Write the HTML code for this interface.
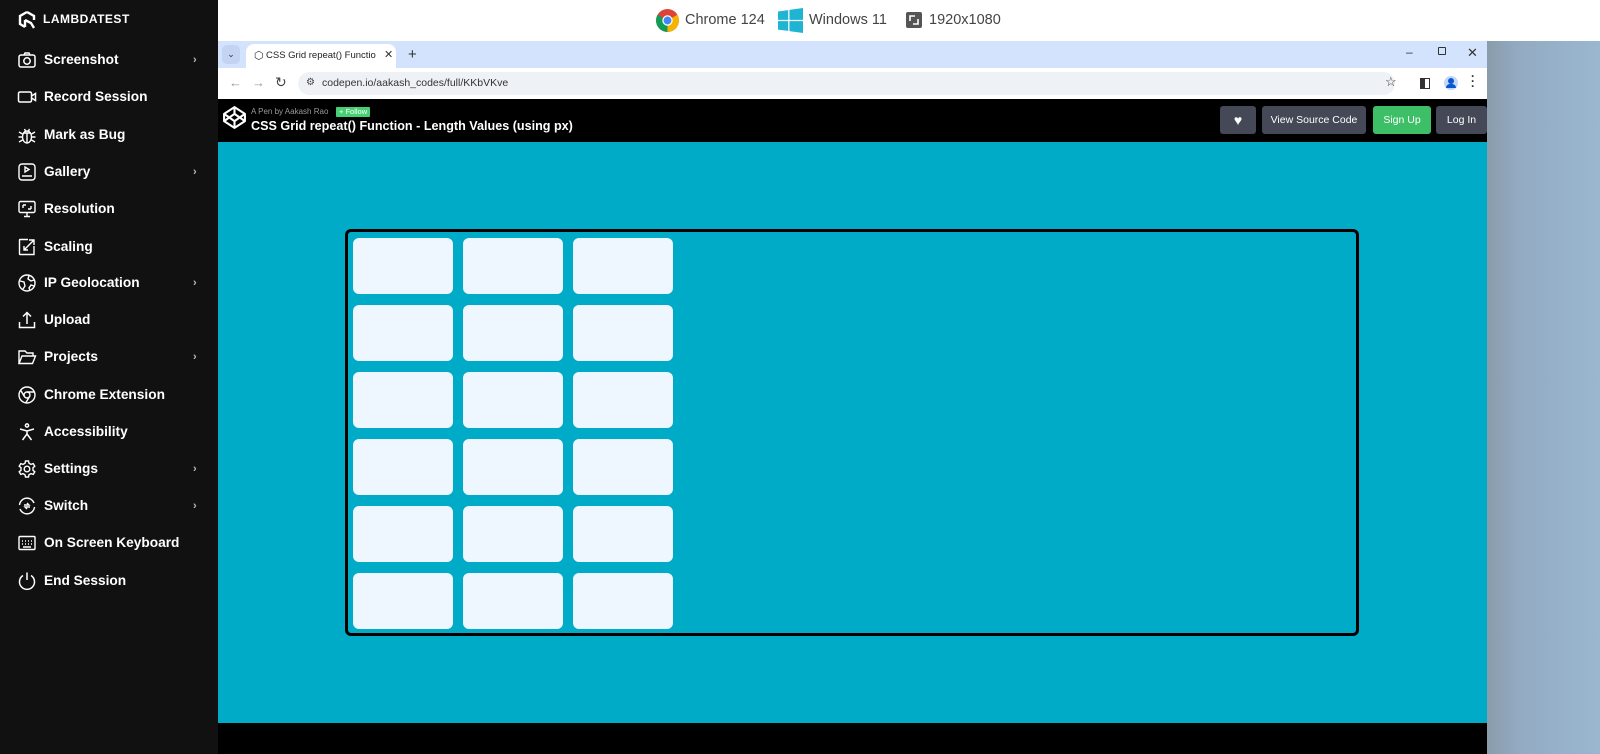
<!DOCTYPE html>
<html><head><meta charset="utf-8"><style>
*{margin:0;padding:0;box-sizing:border-box}
body{width:1600px;height:754px;overflow:hidden;position:relative;background:#fff;font-family:"Liberation Sans",sans-serif}
.a{position:absolute}
#side{left:0;top:0;width:218px;height:754px;background:#111}
.it{position:absolute;left:0;width:218px;height:30px;color:#fff;font-weight:bold;font-size:13.7px;line-height:30px}
.it svg{position:absolute;left:17px;top:5px}
.it span{position:absolute;left:44px}
.it i{position:absolute;left:193px;font-style:normal;font-size:11px;color:#bbb}
.cell{position:absolute;width:100px;height:56px;background:#eef6ff;border-radius:6px}
.btn{position:absolute;top:106px;height:28px;border-radius:3px;color:#fff;font-size:10.5px;line-height:28px;text-align:center;background:#444857}
</style></head><body>
<div id="side" class="a">
 <svg class="a" style="left:17px;top:10px" width="20" height="20" viewBox="0 0 20 20" fill="none" stroke="#fff" stroke-width="2.4"><path d="M10 2 L17 6 V10 M10 2 L3 6 V14 L8 17 M8 10 V17 M8 10 L14 13 L17 18"/></svg>
 <div class="a" style="left:43px;top:12px;color:#fff;font-weight:bold;font-size:12px;letter-spacing:0.5px">LAMBDATEST</div>
 <div class="it" style="top:45px"><svg width="20" height="20" viewBox="0 0 20 20" fill="none" stroke="#fff" stroke-width="1.5"><rect x="2" y="5" width="16" height="12" rx="2"/><circle cx="10" cy="11" r="3.2"/><path d="M7 5 L8 3 H12 L13 5"/></svg><span>Screenshot</span><i>›</i></div>
 <div class="it" style="top:82px"><svg width="20" height="20" viewBox="0 0 20 20" fill="none" stroke="#fff" stroke-width="1.5"><rect x="1.5" y="5" width="13" height="10" rx="1.5"/><path d="M14.5 9 L18.5 6.5 V13.5 L14.5 11"/></svg><span>Record Session</span></div>
 <div class="it" style="top:120px"><svg width="20" height="20" viewBox="0 0 20 20" fill="none" stroke="#fff" stroke-width="1.4"><ellipse cx="10" cy="12" rx="4.5" ry="6"/><path d="M6 8 H14 M10 8 V18 M2 7 L5.5 9 M18 7 L14.5 9 M1.5 12 H5.5 M18.5 12 H14.5 M2 17 L5.5 15 M18 17 L14.5 15 M7.5 4 L8.5 6 M12.5 4 L11.5 6"/></svg><span>Mark as Bug</span></div>
 <div class="it" style="top:157px"><svg width="20" height="20" viewBox="0 0 20 20" fill="none" stroke="#fff" stroke-width="1.4"><rect x="2" y="2" width="16" height="16" rx="3"/><path d="M8 5 L12 7.5 L8 10 Z M5 14 H15"/></svg><span>Gallery</span><i>›</i></div>
 <div class="it" style="top:194px"><svg width="20" height="20" viewBox="0 0 20 20" fill="none" stroke="#fff" stroke-width="1.4"><rect x="2" y="2.5" width="16" height="11" rx="1.5"/><path d="M7 17.5 H13 M10 13.5 V17.5 M6 6 V9 M6 6 H9 M14 10 V7 M14 10 H11"/></svg><span>Resolution</span></div>
 <div class="it" style="top:232px"><svg width="20" height="20" viewBox="0 0 20 20" fill="none" stroke="#fff" stroke-width="1.4"><path d="M11 2.5 H3 A0.5 .5 0 0 0 2.5 3 V17 A.5 .5 0 0 0 3 17.5 H17 V9 M7 13 L17 3 M12 3 H17 V8 M7 9 V13 H11"/></svg><span>Scaling</span></div>
 <div class="it" style="top:268px"><svg width="20" height="20" viewBox="0 0 20 20" fill="none" stroke="#fff" stroke-width="1.4"><circle cx="10" cy="10" r="8"/><path d="M3 8 L7 9 L8 13 L6 16 M12 2.5 L11 6 L14 8 L17 7 M17 13 L14 12 L12 15 L13 17.5"/></svg><span>IP Geolocation</span><i>›</i></div>
 <div class="it" style="top:305px"><svg width="20" height="20" viewBox="0 0 20 20" fill="none" stroke="#fff" stroke-width="1.5"><path d="M2.5 12 V17.5 H17.5 V12 M10 14 V2.5 M6 6.5 L10 2.5 L14 6.5"/></svg><span>Upload</span></div>
 <div class="it" style="top:342px"><svg width="20" height="20" viewBox="0 0 20 20" fill="none" stroke="#fff" stroke-width="1.4"><path d="M2 16.5 V4 H8 L10 6 H16 V9 M2 16.5 L5 9 H18.5 L15.5 16.5 Z"/></svg><span>Projects</span><i>›</i></div>
 <div class="it" style="top:380px"><svg width="20" height="20" viewBox="0 0 20 20" fill="none" stroke="#fff" stroke-width="1.4"><circle cx="10" cy="10" r="8"/><circle cx="10" cy="10" r="3"/><path d="M10 7 H17.5 M7.4 11.5 L3.5 5 M12.6 11.5 L8.7 17.9"/></svg><span>Chrome Extension</span></div>
 <div class="it" style="top:417px"><svg width="20" height="20" viewBox="0 0 20 20" fill="none" stroke="#fff" stroke-width="1.5"><circle cx="10" cy="3.5" r="1.6"/><path d="M3 7 L10 9 L17 7 M10 9 V12 L5.5 18 M10 12 L14.5 18"/></svg><span>Accessibility</span></div>
 <div class="it" style="top:454px"><svg width="20" height="20" viewBox="0 0 20 20" fill="none" stroke="#fff" stroke-width="1.4"><circle cx="10" cy="10" r="2.8"/><path d="M8.5 2 H11.5 L12 4.3 L14 5.4 L16.2 4.6 L17.8 7.2 L16 8.7 V11.3 L17.8 12.8 L16.2 15.4 L14 14.6 L12 15.7 L11.5 18 H8.5 L8 15.7 L6 14.6 L3.8 15.4 L2.2 12.8 L4 11.3 V8.7 L2.2 7.2 L3.8 4.6 L6 5.4 L8 4.3 Z"/></svg><span>Settings</span><i>›</i></div>
 <div class="it" style="top:491px"><svg width="20" height="20" viewBox="0 0 20 20" fill="none" stroke="#fff" stroke-width="1.4"><path d="M2.5 9 A7.5 7.5 0 0 1 17 7 M17.5 11 A7.5 7.5 0 0 1 3 13 M7 9 H12 L10 7 M13 11 H8 L10 13"/></svg><span>Switch</span><i>›</i></div>
 <div class="it" style="top:528px"><svg width="20" height="20" viewBox="0 0 20 20" fill="none" stroke="#fff" stroke-width="1.4"><rect x="2" y="3.5" width="16" height="13" rx="1"/><path d="M5 8 H6 M8 8 H9 M11 8 H12 M14 8 H15 M5 11 H6 M8 11 H9 M11 11 H12 M14 11 H15 M6 14 H14"/></svg><span>On Screen Keyboard</span></div>
 <div class="it" style="top:566px"><svg width="20" height="20" viewBox="0 0 20 20" fill="none" stroke="#fff" stroke-width="1.5"><path d="M6 4.5 A7.5 7.5 0 1 0 14 4.5 M10 1.5 V9"/></svg><span>End Session</span></div>
</div>

<!-- top info bar -->
<svg class="a" style="left:655px;top:8px" width="25" height="25" viewBox="0 0 24 24"><circle cx="12" cy="12" r="11" fill="#db4437"/><path d="M12 12 L2.5 6.5 A11 11 0 0 0 12 23 Z" fill="#0f9d58"/><path d="M12 12 L21.5 6.5 A11 11 0 0 1 12 23 Z" fill="#f4b400"/><circle cx="12" cy="12" r="5" fill="#fff"/><circle cx="12" cy="12" r="3.8" fill="#4285f4"/></svg>
<div class="a" style="left:685px;top:12px;font-size:14.5px;color:#444">Chrome 124</div>
<svg class="a" style="left:778px;top:8px" width="25" height="25" viewBox="0 0 24 24" fill="#1fb4d2"><path d="M0 3.3 L9.8 2 V11.4 H0 Z M11 1.8 L24 0 V11.4 H11 Z M0 12.6 H9.8 V22 L0 20.7 Z M11 12.6 H24 V24 L11 22.2 Z"/></svg>
<div class="a" style="left:809px;top:12px;font-size:14.5px;color:#444">Windows 11</div>
<svg class="a" style="left:906px;top:12px" width="16" height="16" viewBox="0 0 16 16"><rect width="16" height="16" rx="2" fill="#555"/><path d="M4 9 V4 H9 M12 7 V12 H7" stroke="#fff" stroke-width="1.6" fill="none"/></svg>
<div class="a" style="left:929px;top:12px;font-size:14.5px;color:#444">1920x1080</div>

<!-- right bg -->
<div class="a" style="left:1487px;top:41px;width:113px;height:713px;background:linear-gradient(90deg,#8a9cab 0%,#93abc3 30%,#9ab7d0 100%)"></div>

<!-- browser -->
<div class="a" style="left:218px;top:41px;width:1269px;height:27px;background:#d3e3fd"></div>
<div class="a" style="left:222px;top:45px;width:18px;height:19px;border-radius:5px;background:#c2d4f2;font-size:9px;text-align:center;line-height:19px;color:#333">⌄</div>
<div class="a" style="left:246px;top:44px;width:150px;height:24px;background:#fff;border-radius:8px 8px 0 0"></div>
<div class="a" style="left:254px;top:49px;font-size:11px;color:#333">⬡</div>
<div class="a" style="left:266px;top:50px;width:110px;overflow:hidden;font-size:9.5px;color:#222;white-space:nowrap">CSS Grid repeat() Function - L<span style="color:#aaa">e</span></div>
<div class="a" style="left:384px;top:48px;font-size:11px;color:#333">✕</div>
<div class="a" style="left:408px;top:46px;font-size:15px;color:#333">+</div>
<div class="a" style="left:1406px;top:45px;font-size:12px;color:#333">–</div>
<div class="a" style="left:1438px;top:47px;width:8px;height:8px;border:1.3px solid #333;border-radius:1px"></div>
<div class="a" style="left:1467px;top:45px;font-size:13px;color:#333">✕</div>
<div class="a" style="left:218px;top:68px;width:1269px;height:31px;background:#fff"></div>
<div class="a" style="left:229px;top:75px;font-size:13px;color:#999">←</div>
<div class="a" style="left:252px;top:75px;font-size:13px;color:#999">→</div>
<div class="a" style="left:275px;top:74px;font-size:14px;color:#444">↻</div>
<div class="a" style="left:298px;top:72px;width:1097px;height:23px;border-radius:12px;background:#eef1f6"></div>
<div class="a" style="left:306px;top:77px;font-size:10px;color:#444">⚙</div>
<div class="a" style="left:322px;top:77px;font-size:10.5px;color:#333">codepen.io/aakash_codes/full/KKbVKve</div>
<div class="a" style="left:1385px;top:74px;font-size:13px;color:#333">☆</div>
<div class="a" style="left:1420px;top:78px;width:10px;height:11px;border:1.5px solid #333;border-left-width:5px"></div>
<div class="a" style="left:1444px;top:76px;width:14px;height:14px;border-radius:50%;background:#c2d8f8"></div>
<div class="a" style="left:1448px;top:78px;width:6px;height:6px;border-radius:50%;background:#0b57d0"></div>
<div class="a" style="left:1446px;top:84px;width:10px;height:4px;border-radius:4px 4px 0 0;background:#0b57d0"></div>
<div class="a" style="left:1471px;top:74px;font-size:12px;color:#333;font-weight:bold;line-height:5px">·<br>·<br>·</div>

<!-- codepen header -->
<div class="a" style="left:218px;top:99px;width:1269px;height:43px;background:#000"></div>
<svg class="a" style="left:222px;top:105px" width="25" height="25" viewBox="0 0 24 24" fill="none" stroke="#fff" stroke-width="2" stroke-linejoin="round"><path d="M12 2 L22 8.5 V15.5 L12 22 L2 15.5 V8.5 Z M12 22 V15.5 M22 8.5 L12 15.5 L2 8.5 M2 15.5 L12 8.5 L22 15.5 M12 2 V8.5"/></svg>
<div class="a" style="left:251px;top:107px;font-size:8px;color:#999">A Pen by Aakash Rao</div>
<div class="a" style="left:336px;top:107px;height:10px;padding:0 3px;background:#47cf73;color:#fff;font-size:7.5px;line-height:10px;border-radius:1px">+ Follow</div>
<div class="a" style="left:251px;top:119px;font-size:12.6px;font-weight:bold;color:#fff;white-space:nowrap">CSS Grid repeat() Function - Length Values (using px)</div>
<div class="btn" style="left:1220px;width:36px;font-size:14px">♥</div>
<div class="btn" style="left:1262px;width:104px">View Source Code</div>
<div class="btn" style="left:1373px;width:58px;background:#3dbf68;color:#fff">Sign Up</div>
<div class="btn" style="left:1436px;width:51px">Log In</div>

<!-- content -->
<div class="a" style="left:218px;top:142px;width:1269px;height:581px;background:#00abc7"></div>
<div class="a" style="left:218px;top:723px;width:1269px;height:31px;background:#000"></div>
<div class="a" style="left:345px;top:229px;width:1014px;height:407px;border:3px solid #000;border-radius:6px"></div>

<div class="cell" style="left:353px;top:238px"></div><div class="cell" style="left:463px;top:238px"></div><div class="cell" style="left:573px;top:238px"></div>
<div class="cell" style="left:353px;top:305px"></div><div class="cell" style="left:463px;top:305px"></div><div class="cell" style="left:573px;top:305px"></div>
<div class="cell" style="left:353px;top:372px"></div><div class="cell" style="left:463px;top:372px"></div><div class="cell" style="left:573px;top:372px"></div>
<div class="cell" style="left:353px;top:439px"></div><div class="cell" style="left:463px;top:439px"></div><div class="cell" style="left:573px;top:439px"></div>
<div class="cell" style="left:353px;top:506px"></div><div class="cell" style="left:463px;top:506px"></div><div class="cell" style="left:573px;top:506px"></div>
<div class="cell" style="left:353px;top:573px"></div><div class="cell" style="left:463px;top:573px"></div><div class="cell" style="left:573px;top:573px"></div>
</body></html>
